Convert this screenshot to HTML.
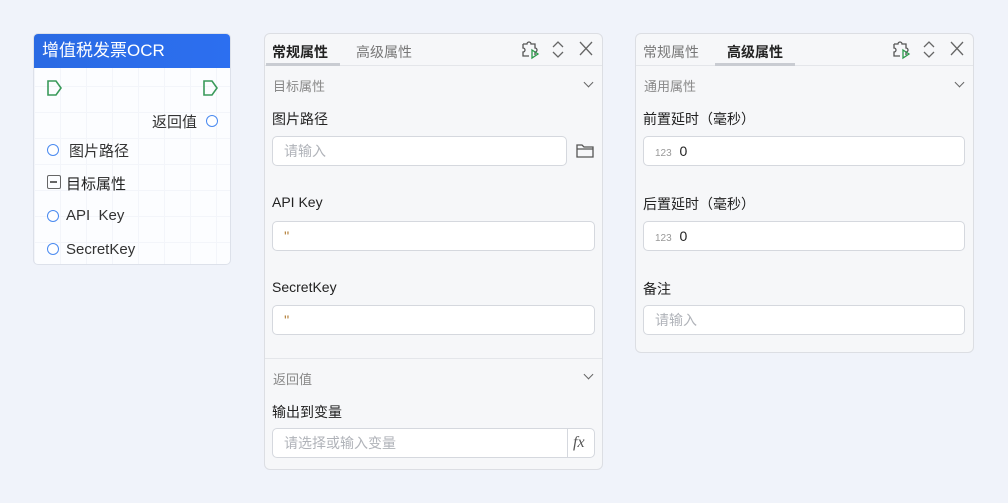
<!DOCTYPE html><html><head><meta charset="utf-8"><style>
*{box-sizing:border-box;margin:0;padding:0}
body{width:1008px;height:503px;background:#f0f3fa;font-family:"Liberation Sans","Noto Sans CJK SC",sans-serif;position:relative;overflow:hidden;color:#333}
.a{position:absolute}
.node{left:33px;top:33px;width:198px;height:232px;background:#fcfdff;border:1px solid #dde1ea;border-radius:5px;overflow:hidden;
background-image:linear-gradient(#f3f5fa 1px,transparent 1px),linear-gradient(90deg,#f3f5fa 1px,transparent 1px);background-size:26px 26px}
.nh{left:0;top:0;width:198px;height:34px;background:linear-gradient(90deg,#2a6ae3,#2c6ff0);color:#fff;font-size:17px;line-height:34px;padding-left:8px}
.ci{width:12px;height:12px;border:1.5px solid #4a8af0;border-radius:50%;background:#fff}
.nt{font-size:15px;color:#333}
.panel{background:#f6f7f9;border:1px solid #dcdee3;border-radius:6px}
.tab{font-size:14px;top:8px}
.sec{font-size:13px;color:#888}
.lbl{font-size:14px;color:#222}
.inp{background:#fff;border:1px solid #d5d8de;border-radius:5px;height:30px;font-size:14px;line-height:28px;padding-left:11px;color:#b0b3b9}
.chev{width:7px;height:7px;border-right:1.5px solid #666;border-bottom:1.5px solid #666;transform:rotate(45deg)}
</style></head><body>
<div class="a node">
<div class="a nh">增值税发票OCR</div>
<svg class="a" style="left:12px;top:45px" width="18" height="18"><path d="M2 2H10L15 9L10 16H2Z" fill="none" stroke="#3a9a5a" stroke-width="1.6"/></svg>
<svg class="a" style="left:168px;top:45px" width="18" height="18"><path d="M2 2H10L15 9L10 16H2Z" fill="none" stroke="#3a9a5a" stroke-width="1.6"/></svg>
<div class="a nt" style="left:118px;top:77px">返回值</div><div class="a ci" style="left:172px;top:81px"></div>
<div class="a ci" style="left:13px;top:110px"></div><div class="a nt" style="left:35px;top:106px">图片路径</div>
<div class="a" style="left:13px;top:141px;width:14px;height:14px;border:1.5px solid #666;border-radius:2px"><div class="a" style="left:2px;top:5px;width:7px;height:1.5px;background:#666"></div></div>
<div class="a nt" style="left:32px;top:139px;color:#222">目标属性</div>
<div class="a ci" style="left:13px;top:176px"></div><div class="a nt" style="left:32px;top:173px">API&nbsp; Key</div>
<div class="a ci" style="left:13px;top:209px"></div><div class="a nt" style="left:32px;top:207px">SecretKey</div>
</div>

<div class="a panel" style="left:264px;top:33px;width:339px;height:437px">
<div class="a" style="left:0;top:31px;width:337px;height:1px;background:#e4e6ea"></div>
<div class="a tab" style="left:7px;font-weight:bold;color:#222">常规属性</div>
<div class="a" style="left:1px;top:29px;width:74px;height:3px;background:#c9ccd2"></div>
<div class="a tab" style="left:91px;color:#777">高级属性</div>
<svg class="a" style="left:255px;top:6px" width="80" height="20" fill="none" stroke-width="1.3"><path d="M3 4h4a2 2 0 014 0h4v4a2 2 0 010 4v3M3 4v4a2 2 0 010 4v4h6" stroke="#555"/><path d="M12 10l6 4-6 4z" stroke="#2a9a4a"/><path d="M33 7l5-5 5 5M33 12l5 5 5-5" stroke="#666"/><path d="M60 2l12 13M72 2L60 15" stroke="#666"/></svg>
<div class="a sec" style="left:8px;top:42px">目标属性</div><div class="a chev" style="left:320px;top:45px"></div>
<div class="a lbl" style="left:7px;top:75px">图片路径</div>
<div class="a inp" style="left:7px;top:102px;width:295px">请输入</div>
<svg class="a" style="left:311px;top:109px" width="18" height="15" fill="none" stroke="#555" stroke-width="1.3"><path d="M1 2h5l2 2h9v10H1z M1 6h16"/></svg>
<div class="a lbl" style="left:7px;top:160px">API Key</div>
<div class="a inp" style="left:7px;top:187px;width:323px;color:#b07a30">''</div>
<div class="a lbl" style="left:7px;top:245px">SecretKey</div>
<div class="a inp" style="left:7px;top:271px;width:323px;color:#b07a30">''</div>
<div class="a" style="left:0;top:324px;width:337px;height:1px;background:#e4e6ea"></div>
<div class="a sec" style="left:8px;top:335px">返回值</div><div class="a chev" style="left:320px;top:337px"></div>
<div class="a lbl" style="left:7px;top:368px">输出到变量</div>
<div class="a inp" style="left:7px;top:394px;width:323px">请选择或输入变量<div class="a" style="left:294px;top:0;width:1px;height:28px;background:#d5d8de"></div><div class="a" style="left:300px;top:0;color:#555;font-style:italic;font-family:'Liberation Serif',serif;font-size:16px">fx</div></div>
</div>

<div class="a panel" style="left:635px;top:33px;width:339px;height:320px">
<div class="a" style="left:0;top:31px;width:337px;height:1px;background:#e4e6ea"></div>
<div class="a tab" style="left:7px;color:#777">常规属性</div>
<div class="a tab" style="left:91px;font-weight:bold;color:#222">高级属性</div>
<div class="a" style="left:79px;top:29px;width:80px;height:3px;background:#c9ccd2"></div>
<svg class="a" style="left:255px;top:6px" width="80" height="20" fill="none" stroke-width="1.3"><path d="M3 4h4a2 2 0 014 0h4v4a2 2 0 010 4v3M3 4v4a2 2 0 010 4v4h6" stroke="#555"/><path d="M12 10l6 4-6 4z" stroke="#2a9a4a"/><path d="M33 7l5-5 5 5M33 12l5 5 5-5" stroke="#666"/><path d="M60 2l12 13M72 2L60 15" stroke="#666"/></svg>
<div class="a sec" style="left:8px;top:42px">通用属性</div><div class="a chev" style="left:320px;top:45px"></div>
<div class="a lbl" style="left:7px;top:75px">前置延时（毫秒）</div>
<div class="a inp" style="left:7px;top:102px;width:322px;color:#222"><span style="font-size:10px;color:#999">123</span>&nbsp; 0</div>
<div class="a lbl" style="left:7px;top:160px">后置延时（毫秒）</div>
<div class="a inp" style="left:7px;top:187px;width:322px;color:#222"><span style="font-size:10px;color:#999">123</span>&nbsp; 0</div>
<div class="a lbl" style="left:7px;top:245px">备注</div>
<div class="a inp" style="left:7px;top:271px;width:322px">请输入</div>
</div>
</body></html>
